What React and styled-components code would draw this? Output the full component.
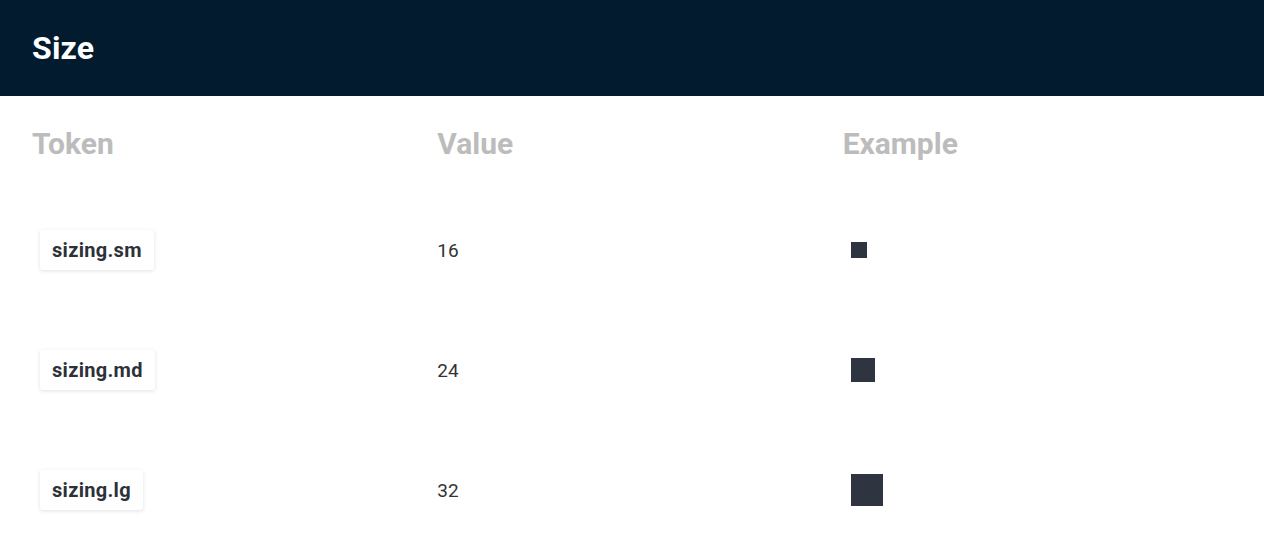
import React from 'react'
import styled, { createGlobalStyle } from 'styled-components'

const GlobalStyle = createGlobalStyle`
  body {
    margin: 0;
    font-family: Roboto, "Liberation Sans", sans-serif;
    background: #fff;
  }
`

const Header = styled.header`
  height: 96px;
  background-color: #021b2f;
  display: flex;
  align-items: center;
  padding: 0 32px;
  box-sizing: border-box;
`

const Title = styled.h1`
  margin: 0;
  color: #fff;
  font-size: 32px;
  font-weight: 700;
  letter-spacing: 0.2px;
`

const Table = styled.div`
  margin: 0 24px;
  display: grid;
  grid-template-columns: repeat(3, 1fr);
`

const HeadCell = styled.div`
  height: 94px;
  display: flex;
  align-items: center;
  padding: 0 8px;
  color: #bcbcbc;
  font-size: 30px;
  font-weight: 700;
`

const Cell = styled.div`
  height: 120px;
  display: flex;
  align-items: center;
  padding: 0 8px;
  color: #333;
  font-size: 19px;
`

const Chip = styled.span`
  margin-left: 8px;
  padding: 0 12px;
  height: 40px;
  display: inline-flex;
  align-items: center;
  background: #fff;
  border-radius: 3px;
  box-shadow: 0 1px 4px rgba(0, 0, 0, 0.12);
  color: #2d3139;
  font-size: 20px;
  font-weight: 700;
  letter-spacing: 0.3px;
`

const Swatch = styled.div`
  margin-left: 8px;
  width: ${p => p.size}px;
  height: ${p => p.size}px;
  background-color: #2f3540;
`

const tokens = [
  { name: 'sizing.sm', value: 16 },
  { name: 'sizing.md', value: 24 },
  { name: 'sizing.lg', value: 32 },
]

export default function App() {
  return (
    <>
      <GlobalStyle />
      <Header>
        <Title>Size</Title>
      </Header>
      <Table>
        <HeadCell>Token</HeadCell>
        <HeadCell>Value</HeadCell>
        <HeadCell>Example</HeadCell>
        {tokens.map(t => (
          <React.Fragment key={t.name}>
            <Cell>
              <Chip>{t.name}</Chip>
            </Cell>
            <Cell>{t.value}</Cell>
            <Cell>
              <Swatch size={t.value} />
            </Cell>
          </React.Fragment>
        ))}
      </Table>
    </>
  )
}
